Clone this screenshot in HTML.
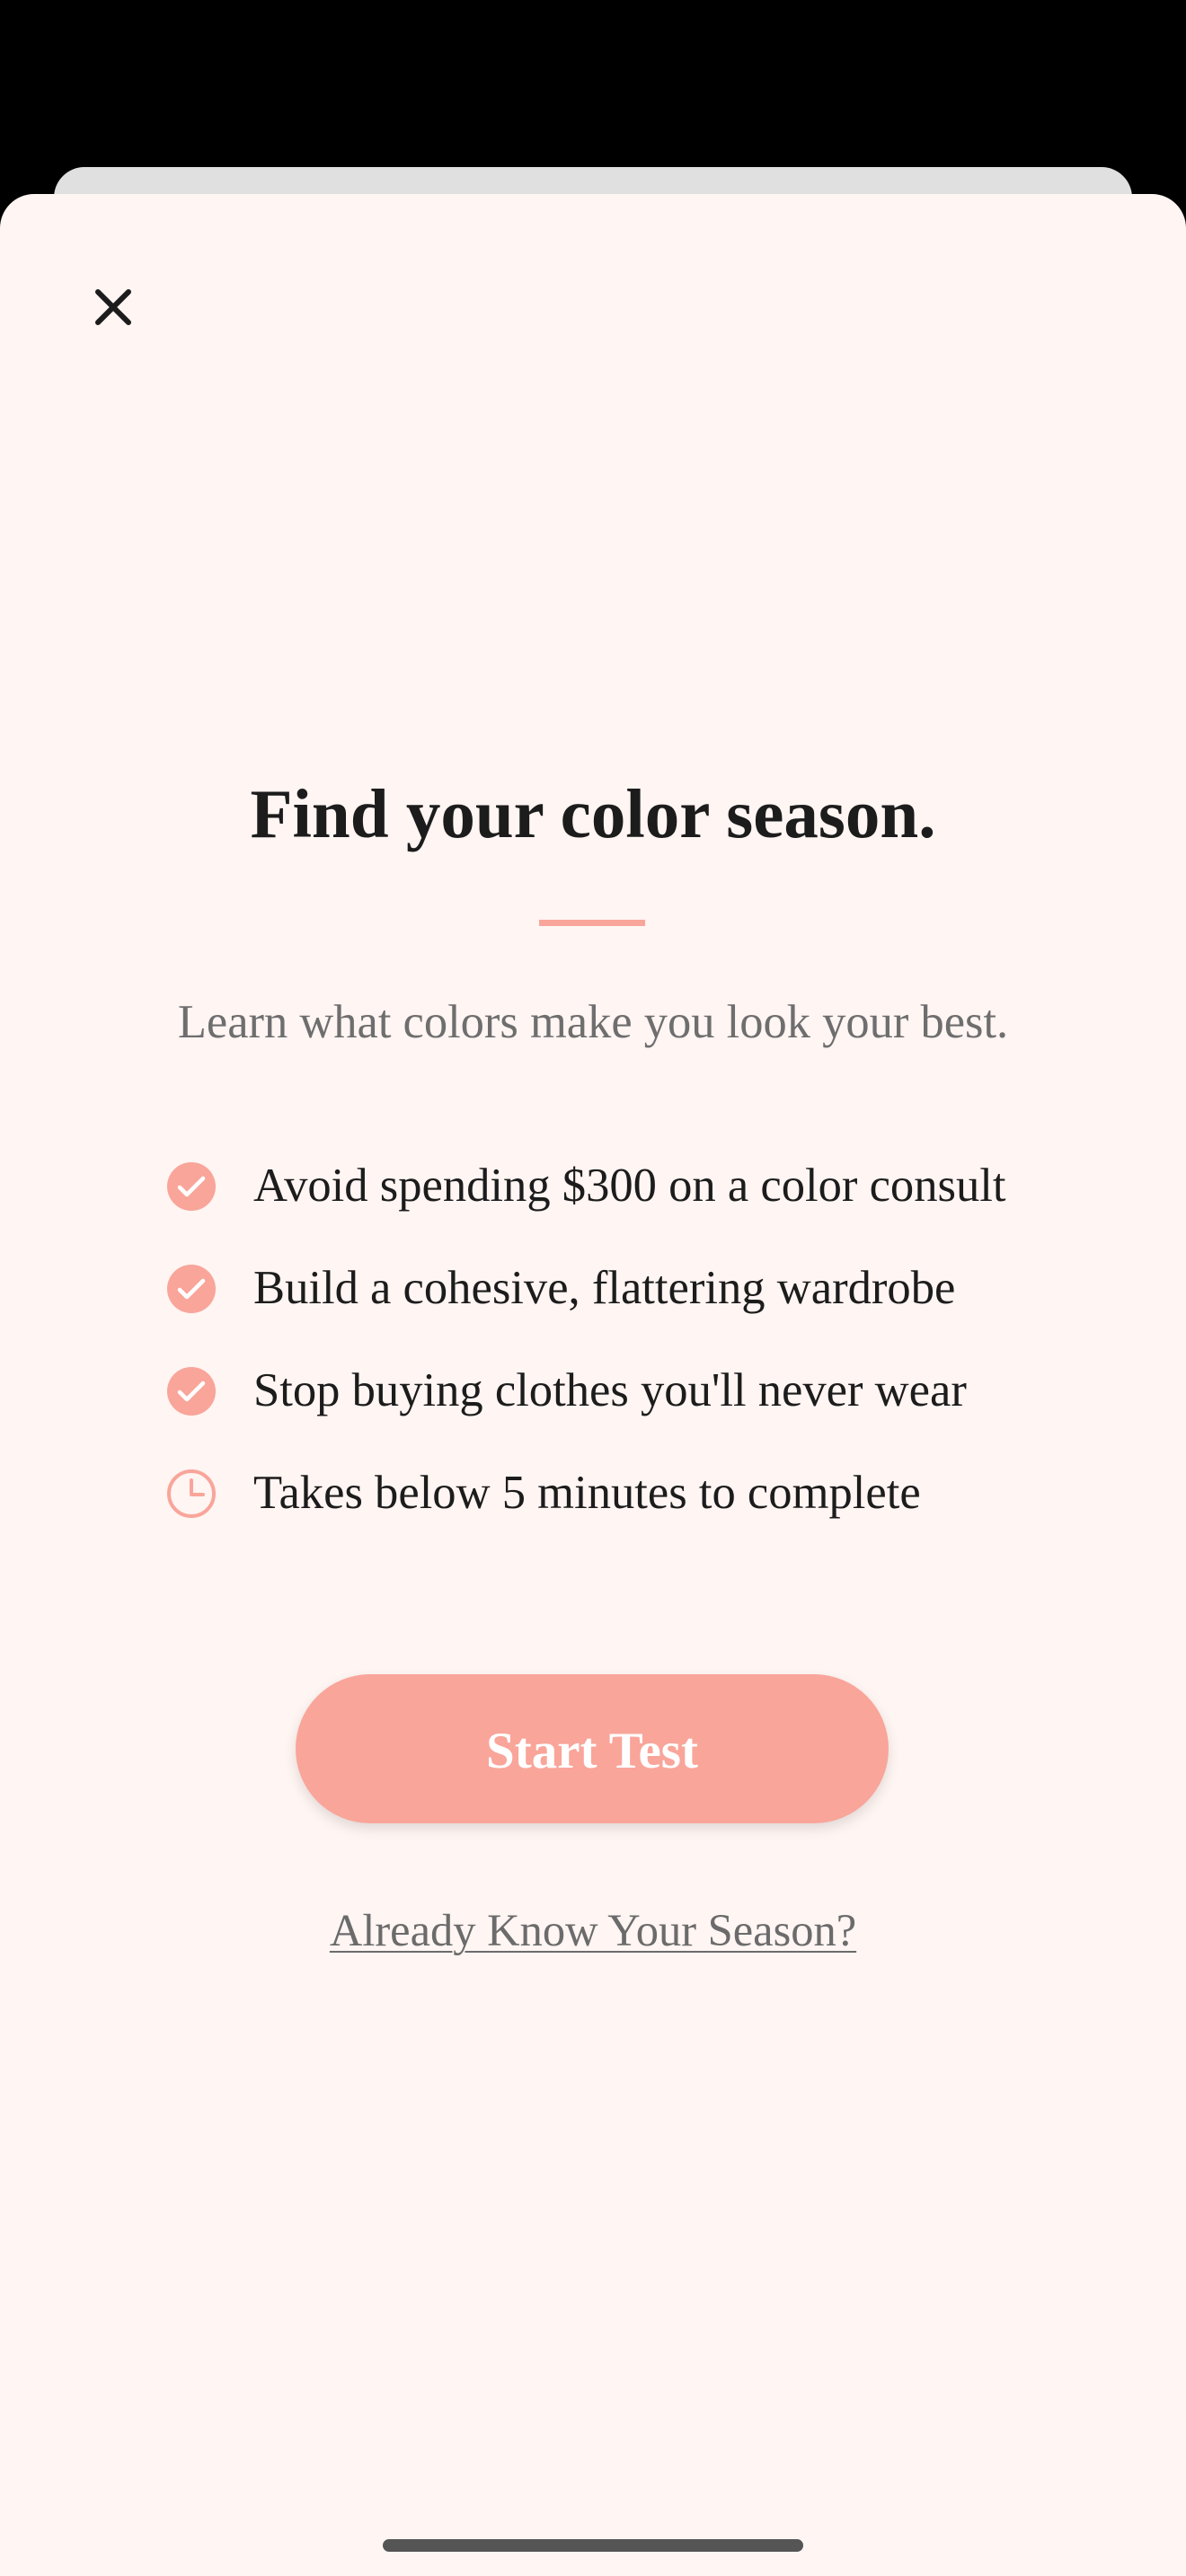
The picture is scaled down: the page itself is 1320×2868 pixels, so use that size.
<!DOCTYPE html>
<html><head><meta charset="utf-8"><style>
html,body{margin:0;padding:0;}
body{width:1320px;height:2868px;background:#000;position:relative;overflow:hidden;font-family:"Liberation Serif",serif;}
.card{position:absolute;left:60px;top:186px;width:1200px;height:200px;background:#e0e0e0;border-radius:34px 34px 0 0;}
.sheet{position:absolute;left:0;top:216px;width:1320px;height:2652px;background:#fff5f3;border-radius:38px 38px 0 0;}
.abs{position:absolute;}
.c{left:0;width:1320px;text-align:center;}
h1{margin:0;font-size:77px;font-weight:bold;color:#1c1c1c;}
.sub{font-size:52.5px;color:#6e6e6e;}
.item{left:186px;height:60px;}
.item .ic{position:absolute;left:0;top:0;width:54px;height:54px;}
.item span{position:absolute;left:96px;top:-4px;font-size:52.6px;color:#1c1c1c;white-space:nowrap;line-height:60px;}
.btn{left:329px;top:1864px;width:660px;height:166px;border-radius:83px;background:#f9a59a;box-shadow:0 6px 14px rgba(0,0,0,0.12);color:#fff;font-weight:bold;font-size:57px;text-align:center;line-height:172px;}
.link{font-size:50.5px;color:#6b6b6b;text-decoration:underline;text-decoration-thickness:2px;text-underline-offset:6px;}
.home{left:426px;top:2827px;width:468px;height:14px;border-radius:7px;background:#555;}
</style></head><body>
<div class="card"></div>
<div class="sheet"></div>
<svg class="abs" style="left:104px;top:320px" width="44" height="44" viewBox="0 0 44 44"><path d="M5 5L39 39M39 5L5 39" stroke="#1c1c1c" stroke-width="6" stroke-linecap="round"/></svg>
<div class="abs c" style="top:862px"><h1>Find your color season.</h1></div>
<div class="abs" style="left:600px;top:1024px;width:118px;height:7px;background:#f9a59a;"></div>
<div class="abs c sub" style="top:1108px">Learn what colors make you look your best.</div>

<div class="abs item" style="top:1294px"><svg class="ic" viewBox="0 0 54 54"><circle cx="27" cy="27" r="27" fill="#f9a59a"/><path d="M14 28L22 36L40 18" stroke="#fff" stroke-width="4.5" fill="none" stroke-linecap="round" stroke-linejoin="round"/></svg><span>Avoid spending $300 on a color consult</span></div>
<div class="abs item" style="top:1408px"><svg class="ic" viewBox="0 0 54 54"><circle cx="27" cy="27" r="27" fill="#f9a59a"/><path d="M14 28L22 36L40 18" stroke="#fff" stroke-width="4.5" fill="none" stroke-linecap="round" stroke-linejoin="round"/></svg><span>Build a cohesive, flattering wardrobe</span></div>
<div class="abs item" style="top:1522px"><svg class="ic" viewBox="0 0 54 54"><circle cx="27" cy="27" r="27" fill="#f9a59a"/><path d="M14 28L22 36L40 18" stroke="#fff" stroke-width="4.5" fill="none" stroke-linecap="round" stroke-linejoin="round"/></svg><span>Stop buying clothes you'll never wear</span></div>
<div class="abs item" style="top:1636px"><svg class="ic" viewBox="0 0 54 54"><circle cx="27" cy="27" r="25" fill="none" stroke="#f9a59a" stroke-width="4"/><path d="M27 12V28H40" stroke="#f9a59a" stroke-width="4" fill="none" stroke-linecap="round" stroke-linejoin="round"/></svg><span>Takes below 5 minutes to complete</span></div>

<div class="abs btn">Start Test</div>
<div class="abs c link" style="top:2120px">Already Know Your Season?</div>
<div class="abs home"></div>
</body></html>
